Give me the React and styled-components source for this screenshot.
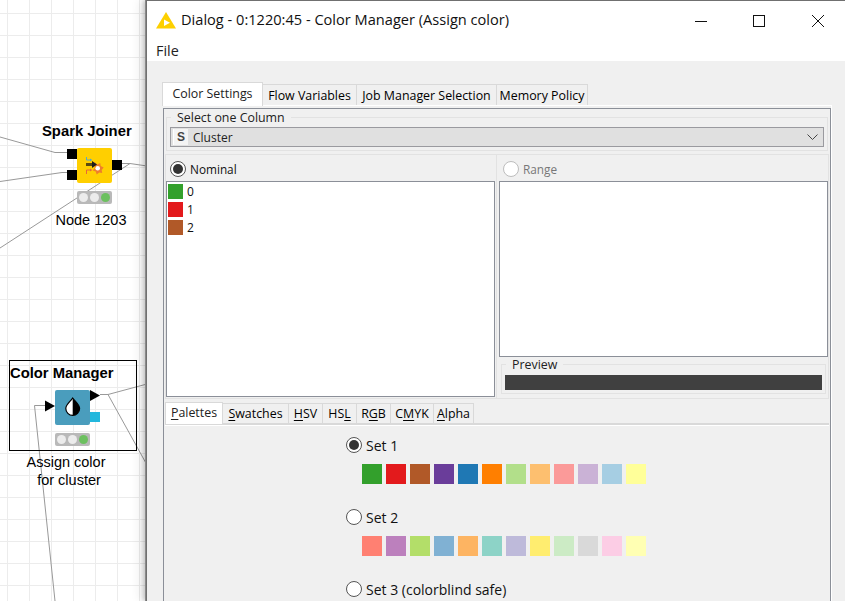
import styled, { createGlobalStyle } from 'styled-components';

const SET_1 = ['#33a02c', '#e31a1c', '#b15928', '#6a3d9a', '#1f78b4', '#ff7f00', '#b2df8a', '#fdbf6f', '#fb9a99', '#cab2d6', '#a6cee3', '#ffff99'];
const SET_2 = ['#ff8072', '#bc80bd', '#b3de69', '#80b1d3', '#fdb462', '#8dd3c7', '#bebada', '#ffed6f', '#ccebc5', '#d9d9d9', '#fccde5', '#ffffb3'];
const CLUSTERS = [
    { label: '0', color: '#33a02c' },
    { label: '1', color: '#e31a1c' },
    { label: '2', color: '#b15928' },
];
const TOP_TABS = [
    { label: 'Flow Variables', width: 94 },
    { label: 'Job Manager Selection', width: 140 },
    { label: 'Memory Policy', width: 91 },
];
const COLOR_TABS = [
    { before: '', key: 'S', after: 'watches', width: 66 },
    { before: '', key: 'H', after: 'SV', width: 34 },
    { before: 'HS', key: 'L', after: '', width: 34 },
    { before: 'R', key: 'G', after: 'B', width: 34 },
    { before: 'C', key: 'M', after: 'YK', width: 43 },
    { before: '', key: 'A', after: 'lpha', width: 40 },
];

const Global = createGlobalStyle`
    html, body {
        margin: 0;
        padding: 0;
        background: #fff;
    }
    * {
        box-sizing: border-box;
    }
`;

const Screen = styled.div`
    position: relative;
    width: 845px;
    height: 601px;
    overflow: hidden;
    font-family: "Open Sans", sans-serif;
`;

const Canvas = styled.div`
    position: absolute;
    inset: 0;
    background-color: #fff;
    background-image:
        linear-gradient(#ececec 1px, transparent 1px),
        linear-gradient(90deg, #ececec 1px, transparent 1px);
    background-size: 22px 22px;
    background-position: 7px 13px;
`;

const Wires = styled.svg`
    position: absolute;
    left: 0;
    top: 0;
`;

const NodeLabel = styled.div`
    position: absolute;
    left: ${(p) => p.$x}px;
    top: ${(p) => p.$y}px;
    width: ${(p) => p.$w}px;
    font-family: "Liberation Sans", sans-serif;
    font-size: ${(p) => (p.$bold ? 14.8 : 14.5)}px;
    line-height: 18px;
    font-weight: ${(p) => (p.$bold ? 700 : 400)};
    text-align: ${(p) => (p.$bold ? 'left' : 'center')};
    white-space: nowrap;
    color: #000;
`;

const SelectBox = styled.div`
    position: absolute;
    left: 9px;
    top: 360px;
    width: 128px;
    height: 91px;
    border: 1px solid #000;
`;

const NodeIcon = styled.div`
    position: absolute;
    left: ${(p) => p.$x}px;
    top: ${(p) => p.$y}px;
    width: 35px;
    height: 35px;
    border-radius: 2px;
    background: ${(p) => p.$color};
`;

const SquarePort = styled.div`
    position: absolute;
    left: ${(p) => p.$x}px;
    top: ${(p) => p.$y}px;
    width: 10px;
    height: 10px;
    background: ${(p) => p.$color || '#000'};
`;

const Traffic = styled.div`
    position: absolute;
    left: ${(p) => p.$x}px;
    top: ${(p) => p.$y}px;
    width: 35px;
    height: 13px;
    padding: 0 2px;
    display: flex;
    align-items: center;
    justify-content: space-between;
    background: #b9b9b9;
    border-radius: 2px;
`;

const Lamp = styled.span`
    width: 9px;
    height: 9px;
    border-radius: 50%;
    background: ${(p) => (p.$on ? '#6cc05f' : '#ececec')};
`;

const Dialog = styled.div`
    position: absolute;
    left: 146px;
    top: 0;
    width: 699px;
    height: 601px;
    display: flex;
    flex-direction: column;
    background: #f0f0f0;
    border-top: 1px solid #707070;
    border-left: 1px solid #707070;
    box-shadow: -1px 0 0 #8a8a8a, -3px 0 4px rgba(0, 0, 0, 0.18), -8px 0 8px rgba(0, 0, 0, 0.06);
    color: #000;
`;

const TitleBar = styled.div`
    height: 39px;
    flex: none;
    display: flex;
    align-items: center;
    padding: 0 21px 0 9px;
    background: #fff;
`;

const Title = styled.div`
    margin-left: 5px;
    padding-bottom: 3px;
    flex: 1;
    font-size: 14.6px;
    color: #111;
    white-space: nowrap;
`;

const WindowButton = styled.svg`
    display: block;
    margin-left: ${(p) => p.$gap}px;
`;

const MenuBar = styled.div`
    height: 21px;
    flex: none;
    padding-left: 9px;
    font-size: 14.4px;
    line-height: 22px;
    background: #fff;
    color: #222;
`;

const Body = styled.div`
    flex: 1;
    min-height: 0;
    padding: 21px 12px 0 15px;
    font-size: 12.4px;
`;

const TabStrip = styled.div`
    display: flex;
    align-items: flex-end;
    height: ${(p) => p.$h}px;
    position: relative;
    z-index: 1;
`;

const Tab = styled.div`
    width: ${(p) => p.$w}px;
    height: ${(p) => p.$h}px;
    margin-bottom: ${(p) => (p.$active ? -1 : 0)}px;
    padding-bottom: ${(p) => (p.$active ? 3 : 0)}px;
    display: flex;
    align-items: center;
    justify-content: center;
    background: ${(p) => (p.$active ? '#fff' : '#f0f0f0')};
    border: 1px solid #d9d9d9;
    border-bottom: none;
    border-left-width: ${(p) => (p.$active ? 1 : 0)}px;
    font-size: 12.4px;
    white-space: nowrap;
    color: ${(p) => (p.$active ? '#222' : '#000')};
`;

const TabPane = styled.div`
    width: 670px;
    height: 497px;
    padding: 2px 0 0 1px;
    border-top: 1px solid #fff;
    border-right: 1px solid #fff;
`;

const Frame = styled.div`
    height: 100%;
    padding: 1px 1px 0 1px;
    border: 1px solid #8b8f98;
    border-bottom: none;
`;

const Group = styled.fieldset`
    margin: 0 1px;
    padding: 3px 3px 3px 3px;
    min-width: 0;
    border: 1px solid #e2e2e2;
`;

const Legend = styled.legend`
    margin-left: 1px;
    padding: 0 6px;
    font-size: 12.4px;
    line-height: 14px;
    color: #222;
    transform: translateY(1px);
`;

const ComboBox = styled.div`
    height: 20px;
    display: flex;
    align-items: center;
    padding: 0 5px 0 2px;
    background: #e0e0e0;
    border: 1px solid #9a9a9f;
`;

const TypeBadge = styled.span`
    width: 15px;
    height: 16px;
    display: flex;
    align-items: center;
    justify-content: center;
    background: #f4f4f4;
    border-left: 1px solid #fff;
    font-family: "Liberation Sans", sans-serif;
    font-size: 12px;
    font-weight: 700;
    color: #444;
`;

const ComboText = styled.span`
    flex: 1;
    margin-left: 5px;
    font-size: 12px;
    color: #222;
`;

const Split = styled.div`
    margin-top: 3px;
    display: grid;
    grid-template-columns: 332px 332px;
    height: 245px;
`;

const SplitPanel = styled.div`
    border: 1px solid #e2e2e2;
    border-left-width: ${(p) => (p.$right ? 0 : 1)}px;
    padding: 6px ${(p) => (p.$right ? 0 : 1)}px 0 ${(p) => (p.$right ? 2 : 0)}px;
    display: flex;
    flex-direction: column;
`;

const RadioRow = styled.div`
    display: flex;
    align-items: center;
    gap: ${(p) => p.$gap}px;
    height: 16px;
    margin-left: ${(p) => p.$indent}px;
    font-size: ${(p) => p.$size || 11.8}px;
    color: ${(p) => (p.$disabled ? '#777' : '#111')};
`;

const Radio = styled.span`
    width: 16px;
    height: 16px;
    border-radius: 50%;
    display: flex;
    align-items: center;
    justify-content: center;
    background: #fff;
    border: 1px solid ${(p) => (p.$disabled ? '#bdbdbd' : '#555')};

    &::after {
        content: "";
        display: ${(p) => (p.$checked ? 'block' : 'none')};
        width: 10px;
        height: 10px;
        border-radius: 50%;
        background: #333;
    }
`;

const ListBox = styled.div`
    margin-top: 4px;
    height: ${(p) => p.$h}px;
    padding: 2px 1px;
    background: #fff;
    border: 1px solid #8b8f98;
    display: flex;
    flex-direction: column;
    gap: 3px;
`;

const ListRow = styled.div`
    display: flex;
    align-items: center;
    gap: 4px;
    height: 15px;
    font-size: 12px;
    color: #111;
`;

const ColorChip = styled.span`
    width: ${(p) => p.$size}px;
    height: ${(p) => p.$size}px;
    flex: none;
    background: ${(p) => p.$color};
`;

const PreviewGroup = styled(Group)`
    margin: 0 2px;
    padding: 4px 3px 3px 3px;
`;

const PreviewBar = styled.div`
    height: 15px;
    background: #404040;
`;

const ColorTabs = styled.div`
    margin-top: 3px;
`;

const ColorPane = styled.div`
    border-top: 2px solid #d9d9d9;
    background: #f0f0f0;
    height: 180px;
    padding-top: 12px;
    box-shadow: inset 0 1px 0 #fff;
`;

const Hotkey = styled.span`
    text-decoration: underline;
    text-underline-offset: 2px;
`;

const SetBlock = styled.div`
    margin-bottom: 25px;
`;

const SwatchRow = styled.div`
    margin: 11px 0 0 197px;
    display: flex;
    gap: 4px;
`;

// spark joiner glyph: small ports on the left, orange spark on the right
const SparkGlyph = () => (
    <svg width="35" height="35" viewBox="0 0 35 35" style={{ display: 'block' }}>
        <path d="M9.500 9v3h5" fill="none" stroke="#5aa7c8" strokeWidth="1" />
        <path d="M13 10.500l2 1.500-2 1.500z" fill="#5aa7c8" />
        <rect x="9" y="15" width="8" height="3" fill="#5a4a10" />
        <path d="M21 13l2.500 2.500 3-1.500 .5 3 3 1.500-2 2.500.5 3-3-.5-2.500 2-1-3-3-1 2-2.500z" fill="#ee7f2b" transform="translate(-3.300 1)" />
        <circle cx="20.700" cy="20.300" r="2.300" fill="#fff" />
        <path d="M15 13l5 3.500-5 3.500z" fill="#1d1d1d" />
        <path d="M9.500 26v-4h5" fill="none" stroke="#e8673a" strokeWidth="1" />
        <path d="M13 20.500l2 1.500-2 1.500z" fill="#e8673a" />
    </svg>
);

const DropGlyph = () => (
    <svg width="35" height="35" viewBox="0 0 35 35" style={{ display: 'block' }}>
        <path d="M17.700 8C15 12 10.800 14.500 10.800 18.500a6.900 6.900 0 0 0 13.800 0C24.600 14.500 20.400 12 17.700 8z" fill="#fff" stroke="#000" strokeWidth="1.200" />
        <path d="M17.700 8C20.400 12 24.600 14.500 24.600 18.500a6.900 6.900 0 0 1-6.900 6.900z" fill="#000" />
    </svg>
);

const KnimeLogo = () => (
    <svg width="20" height="17" viewBox="0 0 20 17" style={{ display: 'block' }}>
        <path d="M10 0L20 16.500H0z" fill="#fdd000" />
        <path d="M8 7.500l6 3.300-6 3.200z" fill="#fff" />
    </svg>
);

const Workflow = () => (
    <Canvas>
        <Wires width="150" height="601" viewBox="0 0 150 601" fill="none" stroke="#999" strokeWidth="1">
            <path d="M0 137L55 152.500H67" />
            <path d="M0 181.500L62 172.500H67" />
            <path d="M0 248L130 163.500" />
            <path d="M122 163.500H130L147 166" />
            <path d="M100 394.500H108L147 384" />
            <path d="M108 394.500L147 465" />
            <path d="M45 405.500H34.500L55 601" />
        </Wires>

        <NodeLabel $bold $x={42} $y={122} $w={100}>Spark Joiner</NodeLabel>
        <SquarePort $x={67} $y={149} />
        <SquarePort $x={67} $y={170} />
        <SquarePort $x={112} $y={160} />
        <NodeIcon $x={77} $y={148} $color="#ffcf00"><SparkGlyph /></NodeIcon>
        <Traffic $x={77} $y={191}><Lamp /><Lamp /><Lamp $on /></Traffic>
        <NodeLabel $x={41} $y={211} $w={100}>Node 1203</NodeLabel>

        <SelectBox />
        <NodeLabel $bold $x={10} $y={364} $w={125}>Color Manager</NodeLabel>
        <Wires width="150" height="601" viewBox="0 0 150 601" fill="#000">
            <path d="M45 400.500L55 406 45 411.500z" />
            <path d="M90 390L100 395.500 90 401z" />
        </Wires>
        <NodeIcon $x={55} $y={390} $color="#4a9dbd"><DropGlyph /></NodeIcon>
        <SquarePort $x={90} $y={412} $color="#22b7dd" />
        <Traffic $x={55} $y={433}><Lamp /><Lamp /><Lamp $on /></Traffic>
        <NodeLabel $x={16} $y={453} $w={100}>Assign color</NodeLabel>
        <NodeLabel $x={19} $y={471} $w={100}>for cluster</NodeLabel>
    </Canvas>
);

const App = () => (
    <Screen>
        <Global />
        <Workflow />
        <Dialog>
            <TitleBar>
                <KnimeLogo />
                <Title>Dialog - 0:1220:45 - Color Manager (Assign color)</Title>
                <WindowButton $gap={0} width="12" height="12" viewBox="0 0 12 12" fill="none" stroke="#111">
                    <path d="M0 6.500H12" />
                </WindowButton>
                <WindowButton $gap={46} width="12" height="12" viewBox="0 0 12 12" fill="none" stroke="#111">
                    <rect x=".5" y=".5" width="11" height="11" />
                </WindowButton>
                <WindowButton $gap={47} width="12" height="12" viewBox="0 0 12 12" fill="none" stroke="#111">
                    <path d="M0 0L12 12M12 0L0 12" />
                </WindowButton>
            </TitleBar>
            <MenuBar>File</MenuBar>
            <Body>
                <TabStrip $h={23}>
                    <Tab $active $w={101} $h={24}>Color Settings</Tab>
                    {TOP_TABS.map((tab) => (
                        <Tab key={tab.label} $w={tab.width} $h={21}>{tab.label}</Tab>
                    ))}
                </TabStrip>
                <TabPane>
                    <Frame>
                        <Group>
                            <Legend>Select one Column</Legend>
                            <ComboBox>
                                <TypeBadge>S</TypeBadge>
                                <ComboText>Cluster</ComboText>
                                <svg width="11" height="6" viewBox="0 0 11 6" fill="none" stroke="#444">
                                    <path d="M.5 .5L5.500 5.500 10.500 .5" />
                                </svg>
                            </ComboBox>
                        </Group>
                        <Split>
                            <SplitPanel>
                                <RadioRow $indent={4} $gap={4}><Radio $checked />Nominal</RadioRow>
                                <ListBox $h={216}>
                                    {CLUSTERS.map((item) => (
                                        <ListRow key={item.label}>
                                            <ColorChip $size={15} $color={item.color} />
                                            {item.label}
                                        </ListRow>
                                    ))}
                                </ListBox>
                            </SplitPanel>
                            <SplitPanel $right>
                                <RadioRow $indent={4} $gap={4} $disabled><Radio $disabled />Range</RadioRow>
                                <ListBox $h={176} />
                                <PreviewGroup>
                                    <Legend>Preview</Legend>
                                    <PreviewBar />
                                </PreviewGroup>
                            </SplitPanel>
                        </Split>
                        <ColorTabs>
                            <TabStrip $h={21}>
                                <Tab $active $w={58} $h={22}><span><Hotkey>P</Hotkey>alettes</span></Tab>
                                {COLOR_TABS.map((tab) => (
                                    <Tab key={tab.key + tab.after} $w={tab.width} $h={20}>
                                        <span>{tab.before}<Hotkey>{tab.key}</Hotkey>{tab.after}</span>
                                    </Tab>
                                ))}
                            </TabStrip>
                            <ColorPane>
                                <SetBlock>
                                    <RadioRow $indent={181} $gap={4} $size={14}><Radio $checked />Set 1</RadioRow>
                                    <SwatchRow>
                                        {SET_1.map((color) => <ColorChip key={color} $size={20} $color={color} />)}
                                    </SwatchRow>
                                </SetBlock>
                                <SetBlock>
                                    <RadioRow $indent={181} $gap={4} $size={14}><Radio />Set 2</RadioRow>
                                    <SwatchRow>
                                        {SET_2.map((color) => <ColorChip key={color} $size={20} $color={color} />)}
                                    </SwatchRow>
                                </SetBlock>
                                <RadioRow $indent={181} $gap={4} $size={14}><Radio />Set 3 (colorblind safe)</RadioRow>
                            </ColorPane>
                        </ColorTabs>
                    </Frame>
                </TabPane>
            </Body>
        </Dialog>
    </Screen>
);

export default App;
